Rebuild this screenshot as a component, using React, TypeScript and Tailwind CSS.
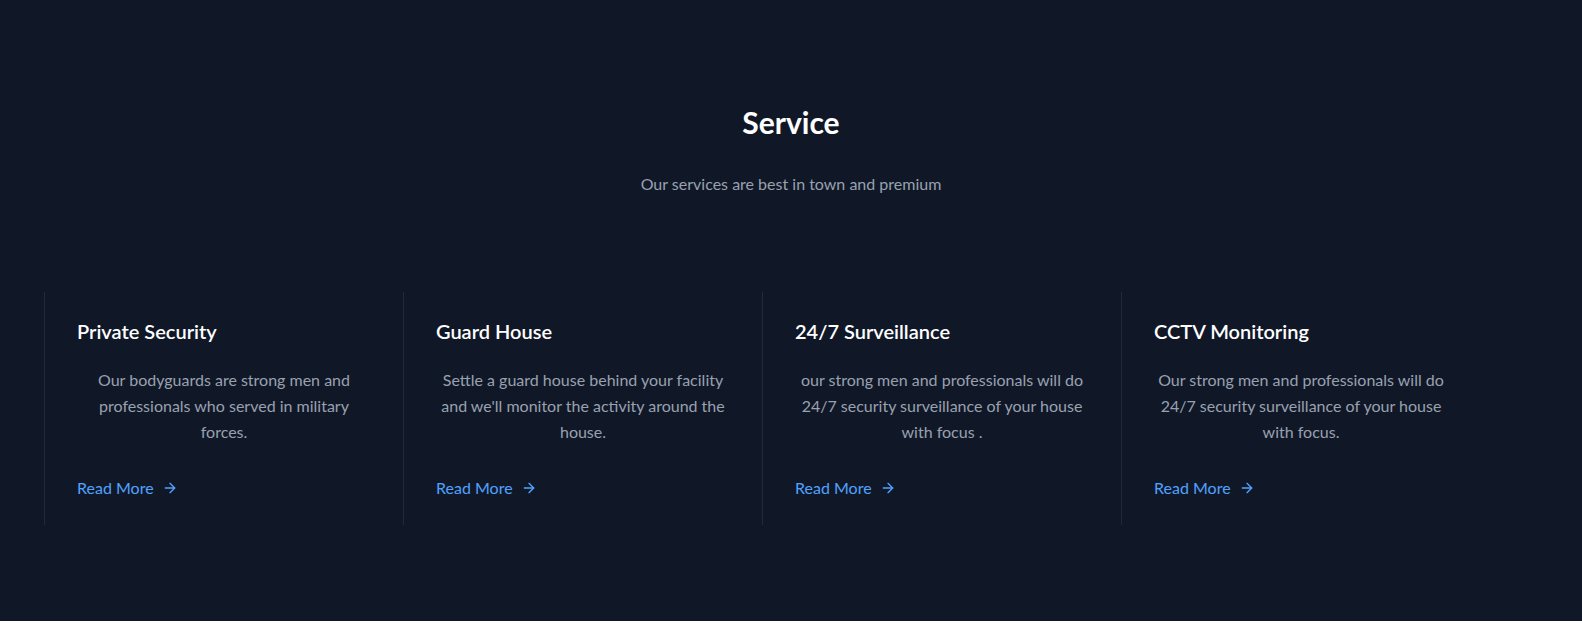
import { ArrowRight } from "lucide-react";

interface Service {
  title: string;
  text: string;
}

const services: Service[] = [
  {
    title: "Private Security",
    text: "Our bodyguards are strong men and professionals who served in military forces.",
  },
  {
    title: "Guard House",
    text: "Settle a guard house behind your facility and we'll monitor the activity around the house.",
  },
  {
    title: "24/7 Surveillance",
    text: "our strong men and professionals will do 24/7 security surveillance of your house with focus .",
  },
  {
    title: "CCTV Monitoring",
    text: "Our strong men and professionals will do 24/7 security surveillance of your house with focus.",
  },
];

function ServiceCard({ title, text }: Service) {
  return (
    <div className="border-l border-[#222a38] px-8 pt-[25px] pb-[25px]">
      <h3 className="text-xl font-semibold text-white">{title}</h3>
      <p className="mt-[22px] text-center leading-[26px] text-gray-400">{text}</p>
      <a href="#" className="mt-[31px] flex items-center text-blue-400">
        Read More
        <ArrowRight size={16} className="ml-2" />
      </a>
    </div>
  );
}

export default function App() {
  return (
    <div className="font-['Lato',sans-serif]">
      {/* Service section */}
      <section className="bg-gray-900 pt-[104px] pb-[96px]">
        <h2 className="text-center text-3xl font-bold text-white">Service</h2>
        <p className="mt-8 text-center text-gray-400">Our services are best in town and premium</p>

        <div className="mt-[96px] grid grid-cols-[repeat(4,359px)] pl-[44px]">
          {services.map((s) => (
            <ServiceCard key={s.title} {...s} />
          ))}
        </div>
      </section>
    </div>
  );
}
